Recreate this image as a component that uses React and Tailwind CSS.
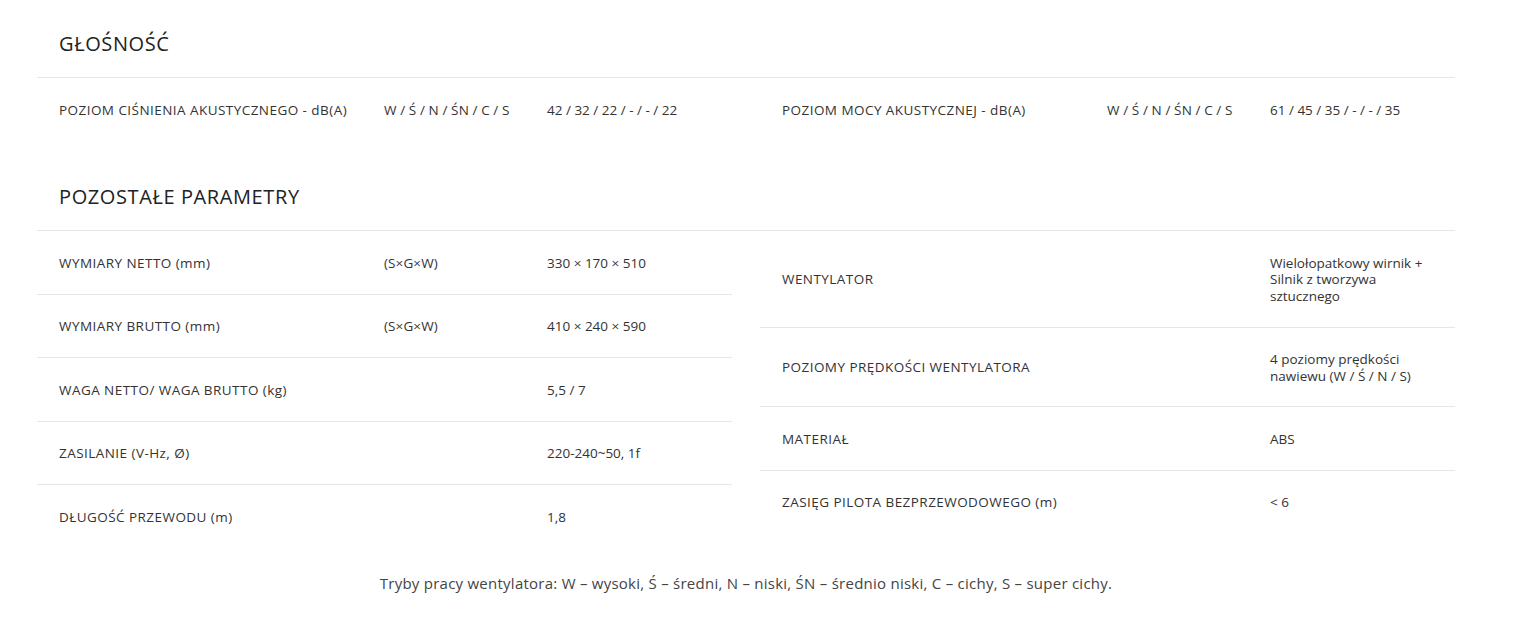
import React from 'react';

const noise = {
  left: [['POZIOM CIŚNIENIA AKUSTYCZNEGO - dB(A)', 'W / Ś / N / ŚN / C / S', '42 / 32 / 22 / - / - / 22']],
  right: [['POZIOM MOCY AKUSTYCZNEJ - dB(A)', 'W / Ś / N / ŚN / C / S', '61 / 45 / 35 / - / - / 35']],
};

const other = {
  left: [
    ['WYMIARY NETTO (mm)', '(S×G×W)', '330 × 170 × 510'],
    ['WYMIARY BRUTTO (mm)', '(S×G×W)', '410 × 240 × 590'],
    ['WAGA NETTO/ WAGA BRUTTO (kg)', '', '5,5 / 7'],
    ['ZASILANIE (V-Hz, Ø)', '', '220-240~50, 1f'],
    ['DŁUGOŚĆ PRZEWODU (m)', '', '1,8'],
  ],
  right: [
    ['WENTYLATOR', '', 'Wielołopatkowy wirnik + Silnik z tworzywa sztucznego'],
    ['POZIOMY PRĘDKOŚCI WENTYLATORA', '', '4 poziomy prędkości nawiewu (W / Ś / N / S)'],
    ['MATERIAŁ', '', 'ABS'],
    ['ZASIĘG PILOTA BEZPRZEWODOWEGO (m)', '', '< 6'],
  ],
};

const SpecTable = ({ rows }) => (
  <div className="flex-1">
    {rows.map((r, i) => (
      <div
        key={i}
        className={`flex items-center text-[13.5px] leading-[16.4px] text-[#333] ${i < rows.length - 1 ? 'border-b border-[#e6e6e6]' : ''}`}
      >
        <div className="w-[325px] shrink-0 pl-[22px] pt-[23.5px] pb-[22.5px] whitespace-nowrap tracking-[0.45px]">{r[0]}</div>
        <div className="w-[163px] shrink-0 pl-[22px] pt-[23.5px] pb-[22.5px] whitespace-nowrap tracking-[0.1px]">{r[1]}</div>
        <div className="flex-1 px-[22px] pt-[23.5px] pb-[22.5px]">{r[2]}</div>
      </div>
    ))}
  </div>
);

const Section = ({ title, data, className }) => (
  <div className={className}>
    <h3 className="px-[22px] pb-[21px] text-[20px] leading-[24px] tracking-[0.6px] text-[#222] border-b border-[#e6e6e6]">
      {title}
    </h3>
    <div className="flex gap-[28px]">
      <SpecTable rows={data.left} />
      <SpecTable rows={data.right} />
    </div>
  </div>
);

export default function App() {
  return (
    <div
      className="bg-white min-h-[618px] px-[37px] pt-[32px] w-[1492px]"
      style={{ fontFamily: '"Open Sans", sans-serif' }}
    >
      <Section title="GŁOŚNOŚĆ" data={noise} />
      <Section title="POZOSTAŁE PARAMETRY" data={other} className="mt-[45px]" />
      <p className="mt-[26px] text-center text-[15px] leading-[20px] tracking-[0.25px] text-[#444]">
        Tryby pracy wentylatora: W – wysoki, Ś – średni, N – niski, ŚN – średnio niski, C – cichy, S – super cichy.
      </p>
    </div>
  );
}
